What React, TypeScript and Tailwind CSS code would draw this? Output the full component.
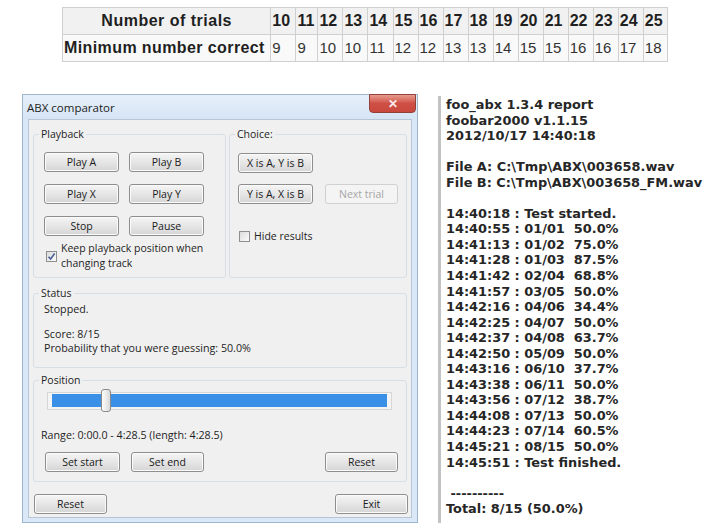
import clsx from 'clsx'

const trials = [10, 11, 12, 13, 14, 15, 16, 17, 18, 19, 20, 21, 22, 23, 24, 25]
const minCorrect = [9, 9, 10, 10, 11, 12, 12, 13, 13, 14, 15, 15, 16, 16, 17, 18]
const colWidths = [25, 22, 25, 25, 25, 25, 25, 25, 25, 25, 25, 25, 25, 25, 25, 24]

const reportLines = [
  'foo_abx 1.3.4 report',
  'foobar2000 v1.1.15',
  '2012/10/17 14:40:18',
  '',
  'File A: C:\\Tmp\\ABX\\003658.wav',
  'File B: C:\\Tmp\\ABX\\003658_FM.wav',
  '',
  '14:40:18 : Test started.',
  '14:40:55 : 01/01  50.0%',
  '14:41:13 : 01/02  75.0%',
  '14:41:28 : 01/03  87.5%',
  '14:41:42 : 02/04  68.8%',
  '14:41:57 : 03/05  50.0%',
  '14:42:16 : 04/06  34.4%',
  '14:42:25 : 04/07  50.0%',
  '14:42:37 : 04/08  63.7%',
  '14:42:50 : 05/09  50.0%',
  '14:43:16 : 06/10  37.7%',
  '14:43:38 : 06/11  50.0%',
  '14:43:56 : 07/12  38.7%',
  '14:44:08 : 07/13  50.0%',
  '14:44:23 : 07/14  60.5%',
  '14:45:21 : 08/15  50.0%',
  '14:45:51 : Test finished.',
  '',
  ' ----------',
  'Total: 8/15 (50.0%)',
]

function Btn({
  children,
  className,
  disabled = false,
}: {
  children: string
  className?: string
  disabled?: boolean
}) {
  return (
    <button
      type="button"
      className={clsx(
        'flex h-[20px] shrink-0 items-center justify-center rounded-[3px] border text-[10.5px] leading-none',
        disabled
          ? 'border-[#d0d0d0] bg-[#f4f4f4] text-[#a6a6a6]'
          : 'border-[#8e8e8e] bg-linear-to-b from-[#f5f5f5] via-[#e6e6e6] to-[#d5d5d5] text-[#1a1a1a] shadow-[inset_0_0_0_1px_#fbfbfb]',
        className,
      )}
    >
      {children}
    </button>
  )
}

function Check({ checked = false }: { checked?: boolean }) {
  return (
    <span className="flex h-[11px] w-[11px] shrink-0 items-center justify-center border border-[#8f8f8f] bg-linear-to-br from-[#dcdcdc] to-[#fbfbfb]">
      {checked && (
        <svg width="9" height="9" viewBox="0 0 9 9">
          <path d="M1.5 4.8 L3.6 7 L7.6 1.6" fill="none" stroke="#4a5f97" strokeWidth="1.6" />
        </svg>
      )}
    </span>
  )
}

function Group({
  label,
  className,
  children,
}: {
  label: string
  className?: string
  children: React.ReactNode
}) {
  return (
    <fieldset className={clsx('rounded-[3px] border border-[#d5dfe5]', className)}>
      <legend className="ml-[5px] px-[2px] text-[10.5px] leading-[14px] text-[#1e1e1e]">
        {label}
      </legend>
      {children}
    </fieldset>
  )
}

function TrialsTable() {
  return (
    <table
      className="ml-[62px] mt-[7px] w-[606px] table-fixed border-collapse text-[#1f1f1f]"
      style={{ fontFamily: '"Liberation Sans", Arial, sans-serif' }}
    >
      <colgroup>
        <col className="w-[208px]" />
        {colWidths.map((w, i) => (
          <col key={i} style={{ width: w }} />
        ))}
      </colgroup>
      <tbody>
        <tr className="h-[27px] bg-[#f1f1f1]">
          <td className="whitespace-nowrap border border-[#d0d0d0] text-center text-[16px] font-bold tracking-[0.5px]">
            Number of trials
          </td>
          {trials.map((t) => (
            <td
              key={t}
              className="whitespace-nowrap border border-[#d0d0d0] pl-[1px] text-[16px] font-bold"
            >
              {t}
            </td>
          ))}
        </tr>
        <tr className="h-[27px] bg-[#f9f9f9]">
          <td className="whitespace-nowrap border border-[#d0d0d0] pl-[1px] text-[16px] font-bold tracking-[0.4px]">
            Minimum number correct
          </td>
          {minCorrect.map((m, i) => (
            <td key={i} className="whitespace-nowrap border border-[#d0d0d0] pl-[1px] text-[15px] text-[#333]">
              {m}
            </td>
          ))}
        </tr>
      </tbody>
    </table>
  )
}

function AbxDialog() {
  return (
    <div
      className="ml-[22px] flex h-[429px] w-[396px] flex-col border border-[#9fb6d1] bg-[#d9e7f6]"
      style={{ fontFamily: '"Open Sans", "Noto Sans", sans-serif' }}
    >
      {/* title bar */}
      <div className="flex h-[24px] shrink-0 items-start justify-between bg-linear-to-b from-[#e6eff9] to-[#d6e5f5]">
        <span className="mt-[6px] ml-[4px] text-[11.5px] leading-[14px] text-[#222]">ABX comparator</span>
        <span className="-mt-px mr-[1px] flex h-[19px] w-[47px] items-center justify-center rounded-b-[4px] border border-[#92423a] bg-linear-to-b from-[#e79a8f] via-[#cf4f45] to-[#c8493c] text-[12px] font-bold leading-none text-[#fbeaea]">
          ✕
        </span>
      </div>

      {/* client */}
      <div className="mx-[5px] flex h-[399px] flex-col border border-[#b7c6d6] bg-[#f0f0f0]">
        <div className="mt-[7px] flex gap-[3px] pl-[4px]">
          <Group label="Playback" className="h-[151px] w-[193px]">
            <div className="flex flex-col gap-[12px] pl-[10px] pt-[11px]">
              <div className="flex gap-[10px]">
                <Btn className="w-[75px]">Play A</Btn>
                <Btn className="w-[75px]">Play B</Btn>
              </div>
              <div className="flex gap-[10px]">
                <Btn className="w-[75px]">Play X</Btn>
                <Btn className="w-[75px]">Play Y</Btn>
              </div>
              <div className="flex gap-[10px]">
                <Btn className="w-[75px]">Stop</Btn>
                <Btn className="w-[75px]">Pause</Btn>
              </div>
            </div>
            <div className="ml-[12px] mt-[5px] flex items-center gap-[4px]">
              <Check checked />
              <span className="text-[10.5px] leading-[15px] text-[#1e1e1e]">
                Keep playback position when
                <br />
                changing track
              </span>
            </div>
          </Group>

          <Group label="Choice:" className="h-[151px] w-[178px]">
            <div className="flex flex-col gap-[11px] pl-[8px] pt-[12px]">
              <Btn className="w-[75px]">X is A, Y is B</Btn>
              <div className="flex gap-[12px]">
                <Btn className="w-[75px]">Y is A, X is B</Btn>
                <Btn className="w-[73px]" disabled>
                  Next trial
                </Btn>
              </div>
            </div>
            <div className="ml-[9px] mt-[25px] flex items-center gap-[4px]">
              <Check />
              <span className="text-[10.5px] leading-[15px] text-[#1e1e1e]">Hide results</span>
            </div>
          </Group>
        </div>

        <Group label="Status" className="mx-[4px] mt-[8px] h-[82px]">
          <div className="pl-[10px] pt-[2px] text-[10.7px] leading-[14px] text-[#1e1e1e]">
            <p>Stopped.</p>
            <p className="mt-[11px]">Score: 8/15</p>
            <p>Probability that you were guessing: 50.0%</p>
          </div>
        </Group>

        <Group label="Position" className="mx-[4px] mt-[5px] h-[109px]">
          <div className="relative ml-[13px] mt-[2px] flex h-[23px] w-[345px] items-center">
            <div className="flex h-[18px] w-full items-center border border-[#d6d6d6] bg-[#f4f4f4] px-[4px]">
              <div className="h-[13px] w-full bg-[#3a8fe7]" />
            </div>
            <div className="absolute left-[54px] top-0 h-[23px] w-[10px] rounded-[3px] border border-[#8a8a8a] bg-linear-to-r from-[#fdfdfd] via-[#ececec] to-[#d8d8d8]" />
          </div>
          <p className="mt-[16px] pl-[7px] text-[10.7px] leading-[14px] text-[#1e1e1e]">
            Range: 0:00.0 - 4:28.5 (length: 4:28.5)
          </p>
          <div className="mt-[10px] flex pl-[11px] pr-[8px]">
            <Btn className="w-[75px]">Set start</Btn>
            <Btn className="ml-[11px] w-[73px]">Set end</Btn>
            <Btn className="ml-auto w-[73px]">Reset</Btn>
          </div>
        </Group>

        <div className="mt-[12px] flex justify-between pl-[5px] pr-[3px]">
          <Btn className="w-[73px]">Reset</Btn>
          <Btn className="w-[73px]">Exit</Btn>
        </div>
      </div>
    </div>
  )
}

function Report() {
  return (
    <div
      className="ml-[20px] mt-[2px] h-[427px] border-l-[3px] border-[#c3c3c3] pl-[5px] pt-[1px] text-[12.9px] font-bold leading-[15.56px] whitespace-pre text-[#262626]"
      style={{ fontFamily: '"DejaVu Sans", Verdana, sans-serif' }}
    >
      {reportLines.map((line, i) => (
        <div key={i} className="h-[15.56px]">
          {line}
        </div>
      ))}
    </div>
  )
}

export default function App() {
  return (
    <div className="flex h-[528px] w-[723px] flex-col overflow-hidden bg-white">
      <TrialsTable />
      <div className="mt-[32px] flex">
        <AbxDialog />
        <Report />
      </div>
    </div>
  )
}
